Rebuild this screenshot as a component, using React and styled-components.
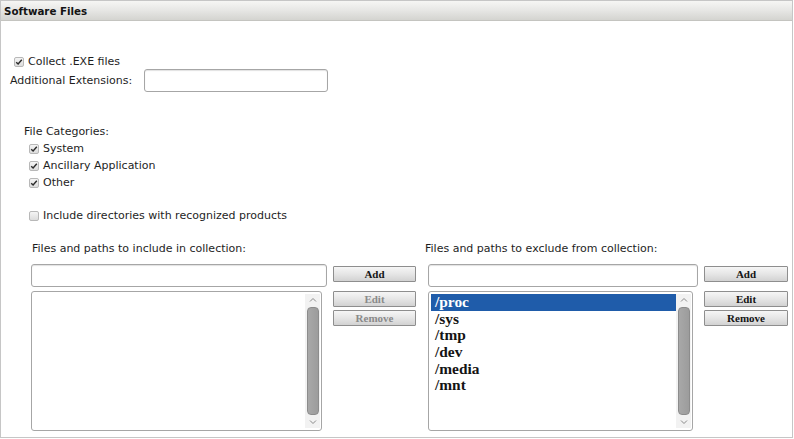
import React from 'react';
import styled, { createGlobalStyle } from 'styled-components';

const GlobalStyle = createGlobalStyle`
  html, body {
    margin: 0;
    padding: 0;
    background: #ffffff;
  }
  body {
    font-family: 'DejaVu Sans', Verdana, sans-serif;
    font-size: 11px;
    color: #1e1e1e;
  }
`;

const Panel = styled.div`
  box-sizing: border-box;
  width: 793px;
  height: 438px;
  border: 1px solid #c6c6c6;
  background: #ffffff;
  display: flex;
  flex-direction: column;
`;

const Header = styled.div`
  box-sizing: border-box;
  height: 20px;
  padding-left: 3px;
  display: flex;
  align-items: center;
  background: linear-gradient(#f6f6f4 0%, #e8e8e6 45%, #d4d4d0 100%);
  border-bottom: 1px solid #c4c4c0;
  font-weight: bold;
  font-size: 10.3px;
  color: #141414;
`;

const Body = styled.div`
  display: flex;
  flex-direction: column;
`;

const Row = styled.div`
  display: flex;
  align-items: center;
  height: ${({ h }) => h || 14}px;
  margin-top: ${({ mt }) => mt || 0}px;
  padding-left: ${({ pl }) => pl || 0}px;
  line-height: 14px;
  white-space: nowrap;
`;

const Box = styled.span`
  box-sizing: border-box;
  width: 10px;
  height: 10px;
  margin-right: 4px;
  border: 1px solid #b8b8b8;
  border-radius: 2px;
  background: linear-gradient(#f4f4f4, #dcdcdc);
  display: inline-flex;
  align-items: center;
  justify-content: center;
`;

const Check = ({ checked }) => (
  <Box>
    {checked && (
      <svg width="8" height="8" viewBox="0 0 8 8">
        <path d="M1.2 4.2 L3.1 6 L6.8 1.8" fill="none" stroke="#2a2a2a" strokeWidth="1.4" />
      </svg>
    )}
  </Box>
);

const Label = styled.span`
  margin-right: ${({ mr }) => mr || 0}px;
`;

const TextInput = styled.input`
  box-sizing: border-box;
  width: ${({ w }) => w}px;
  height: 23px;
  margin: 0;
  border: 1px solid #a6a6a6;
  border-radius: 3px;
  background: #ffffff;
  box-shadow: inset 0 1px 1px #e2e2e2;
  outline: none;
`;

const Columns = styled.div`
  display: flex;
  margin-top: 19px;
  padding-left: 30px;
  gap: 12px;
`;

const Column = styled.div`
  display: flex;
  flex-direction: column;
`;

const ColumnLabel = styled.div`
  height: 14px;
  line-height: 14px;
  margin-left: ${({ ml }) => ml}px;
  white-space: nowrap;
`;

const Grid = styled.div`
  display: grid;
  grid-template-columns: ${({ w }) => w}px ${({ bw }) => bw}px;
  column-gap: 6px;
  row-gap: 4px;
  margin-top: 8px;
`;

const Button = styled.button`
  box-sizing: border-box;
  width: 100%;
  height: 16px;
  margin: ${({ mt }) => mt || 0}px 0 0 0;
  padding: 0;
  border: 1px solid #8e8e8e;
  border-radius: 1px;
  background: linear-gradient(#f6f6f6 0%, #e4e4e4 55%, #d2d2d2 100%);
  font-family: 'Liberation Serif', 'Times New Roman', serif;
  font-weight: bold;
  font-size: 11px;
  line-height: 14px;
  color: ${({ disabled }) => (disabled ? '#8a8a8a' : '#141414')};
`;

const ButtonStack = styled.div`
  display: flex;
  flex-direction: column;
  gap: 3px;
`;

const ListBox = styled.div`
  box-sizing: border-box;
  width: ${({ w }) => w}px;
  height: 140px;
  border: 1px solid #a6a6a6;
  border-radius: 3px;
  padding: 2px 1px 2px 2px;
  display: flex;
  background: #ffffff;
`;

const Items = styled.div`
  flex: 1;
  display: flex;
  flex-direction: column;
`;

const Item = styled.div`
  height: 16.7px;
  line-height: 16.7px;
  padding-left: 4px;
  font-family: 'Liberation Serif', 'Times New Roman', serif;
  font-weight: bold;
  font-size: 15.4px;
  color: ${({ selected }) => (selected ? '#ffffff' : '#141414')};
  background: ${({ selected }) => (selected ? '#1f5caa' : 'transparent')};
`;

const ScrollBar = styled.div`
  width: 15px;
  display: flex;
  flex-direction: column;
  align-items: center;
  background: #f2f2f2;
`;

const Arrow = styled.div`
  height: 12px;
  width: 15px;
  display: flex;
  align-items: center;
  justify-content: center;
`;

const Thumb = styled.div`
  box-sizing: border-box;
  flex: 1;
  width: 12px;
  margin: 1px 0;
  border: 1px solid #8c8c8c;
  border-radius: 4px;
  background: linear-gradient(90deg, #a8a8a8, #9c9c9c);
`;

const Chevron = ({ down }) => (
  <svg width="8" height="6" viewBox="0 0 8 6">
    <path
      d={down ? 'M1 1.5 L4 4.5 L7 1.5' : 'M1 4.5 L4 1.5 L7 4.5'}
      fill="none"
      stroke="#8a8a8a"
      strokeWidth="1"
    />
  </svg>
);

const List = ({ w, items = [], selected }) => (
  <ListBox w={w}>
    <Items>
      {items.map((it) => (
        <Item key={it} selected={it === selected}>
          {it}
        </Item>
      ))}
    </Items>
    <ScrollBar>
      <Arrow>
        <Chevron />
      </Arrow>
      <Thumb />
      <Arrow>
        <Chevron down />
      </Arrow>
    </ScrollBar>
  </ListBox>
);

const PathColumn = ({ label, labelOffset, inputWidth, buttonWidth, items, selected, disabled }) => (
  <Column>
    <ColumnLabel ml={labelOffset}>{label}</ColumnLabel>
    <Grid w={inputWidth} bw={buttonWidth}>
      <TextInput w={inputWidth} />
      <Button mt={2}>Add</Button>
      <List w={inputWidth - 5} items={items} selected={selected} />
      <ButtonStack>
        <Button disabled={disabled}>Edit</Button>
        <Button disabled={disabled}>Remove</Button>
      </ButtonStack>
    </Grid>
  </Column>
);

const categories = ['System', 'Ancillary Application', 'Other'];
const excluded = ['/proc', '/sys', '/tmp', '/dev', '/media', '/mnt'];

export default function App() {
  return (
    <>
      <GlobalStyle />
      <Panel>
        <Header>Software Files</Header>
        <Body>
          <Row mt={34} pl={13}>
            <Check checked />
            <Label>Collect .EXE files</Label>
          </Row>
          <Row mt={0} h={23} pl={9}>
            <Label mr={12}>Additional Extensions:</Label>
            <TextInput w={184} />
          </Row>
          <Row mt={33} pl={23}>
            <Label>File Categories:</Label>
          </Row>
          {categories.map((c) => (
            <Row key={c} mt={3} pl={28}>
              <Check checked />
              <Label>{c}</Label>
            </Row>
          ))}
          <Row mt={19} pl={28}>
            <Check />
            <Label>Include directories with recognized products</Label>
          </Row>
          <Columns>
            <PathColumn
              label="Files and paths to include in collection:"
              labelOffset={1}
              inputWidth={296}
              buttonWidth={83}
              items={[]}
              disabled
            />
            <PathColumn
              label="Files and paths to exclude from collection:"
              labelOffset={-3}
              inputWidth={270}
              buttonWidth={84}
              items={excluded}
              selected="/proc"
            />
          </Columns>
        </Body>
      </Panel>
    </>
  );
}
